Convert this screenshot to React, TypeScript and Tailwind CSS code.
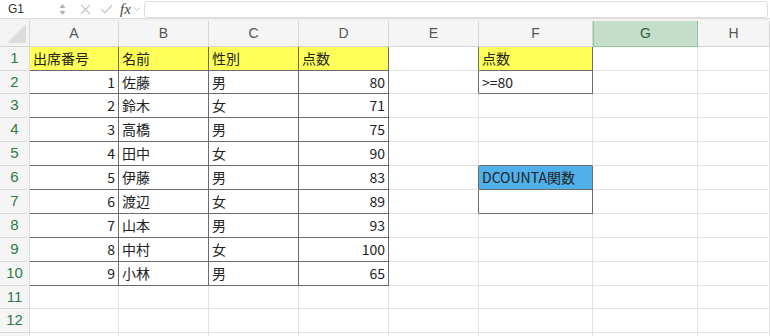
import { Fragment } from 'react';

type Cell = { v?: string; align?: 'l' | 'r'; bg?: string };

const cols = ['A', 'B', 'C', 'D', 'E', 'F', 'G', 'H'];
const rowHeights = [24, 23, 24, 24, 24, 24, 24, 24, 24, 24, 23, 24, 24];

const people = [
  ['1', '佐藤', '男', '80'],
  ['2', '鈴木', '女', '71'],
  ['3', '高橋', '男', '75'],
  ['4', '田中', '女', '90'],
  ['5', '伊藤', '男', '83'],
  ['6', '渡辺', '女', '89'],
  ['7', '山本', '男', '93'],
  ['8', '中村', '女', '100'],
  ['9', '小林', '男', '65'],
];

const sheet: Record<string, Cell> = {};
['出席番号', '名前', '性別', '点数'].forEach((h, i) => {
  sheet[`${i},0`] = { v: h, bg: 'bg-[#ffff57]' };
});
people.forEach((p, r) => {
  p.forEach((v, c) => {
    sheet[`${c},${r + 1}`] = { v, align: c === 0 || c === 3 ? 'r' : 'l' };
  });
});
sheet['5,0'] = { v: '点数', bg: 'bg-[#ffff57]' };
sheet['5,1'] = { v: '>=80' };
sheet['5,5'] = { v: 'DCOUNTA関数', bg: 'bg-[#4fb0ea]' };

// ranges with dark borders
const inBox = (c: number, r: number) =>
  (c >= 0 && c <= 3 && r >= 0 && r <= 9) ||
  (c === 5 && (r === 0 || r === 1 || r === 5 || r === 6));

const FormulaBar = () => (
  <div className="flex h-[19px] items-center border-b border-[#dcdcdc] bg-white text-[#333]">
    <div className="flex w-[68px] items-center justify-between pl-[8px] pr-[2px] font-['Liberation_Sans',sans-serif] text-[12px]">
      <span>G1</span>
      <svg width="7" height="13" viewBox="0 0 7 13">
        <path d="M3.5 1 L6.5 5 H0.5 Z" fill="#b0b0b0" />
        <path d="M3.5 12 L6.5 8 H0.5 Z" fill="#b0b0b0" />
      </svg>
    </div>
    <svg className="ml-[12px]" width="11" height="11" viewBox="0 0 11 11">
      <path d="M1 1 L10 10 M10 1 L1 10" stroke="#c8c8c8" strokeWidth="1.3" />
    </svg>
    <svg className="ml-[9px]" width="13" height="10" viewBox="0 0 13 10">
      <path d="M1 5 L4.8 8.8 L12 1.2" stroke="#c8c8c8" strokeWidth="1.3" fill="none" />
    </svg>
    <span className="ml-[7px] font-['Liberation_Serif',serif] text-[15px] italic leading-none text-[#444]">fx</span>
    <svg className="ml-[2px]" width="8" height="6" viewBox="0 0 8 6">
      <path d="M1 1.5 L4 4.5 L7 1.5" stroke="#c4c4c4" strokeWidth="1" fill="none" />
    </svg>
    <div className="ml-[3px] mr-[2px] h-[17px] flex-1 rounded-[3px] border border-[#dedede] bg-white" />
  </div>
);

export default function App() {
  return (
    <div className="h-[336px] w-[770px] overflow-hidden bg-white font-['Noto_Sans_CJK_JP',sans-serif] text-[#222]">
      <FormulaBar />
      <div className="h-[2px] bg-[#f2f2f2]" />
      <div className="grid grid-cols-[30px_89px_90px_90px_90px_90px_114px_105px_72px]">
        {/* header row */}
        <div className="relative h-[26px] border-b border-r border-[#d6d6d6] bg-[#f3f3f3]">
          <svg className="absolute bottom-[3px] right-[3px]" width="19" height="19" viewBox="0 0 19 19">
            <path d="M19 0 L19 19 L0 19 Z" fill="#dcdcdc" />
          </svg>
        </div>
        {cols.map((c) =>
          c === 'G' ? (
            <div
              key={c}
              className="flex h-[26px] items-center justify-center border-x border-b border-[#93c6a3] bg-[#c3dfcc] font-['Liberation_Sans',sans-serif] text-[14px] text-[#2f5e3e]"
            >
              {c}
            </div>
          ) : (
            <div
              key={c}
              className="flex h-[26px] items-center justify-center border-b border-r border-[#d6d6d6] bg-[#f5f5f5] font-['Liberation_Sans',sans-serif] text-[14px] text-[#555]"
            >
              {c}
            </div>
          )
        )}
        {rowHeights.map((h, r) => (
          <Fragment key={r}>
            <div
              className="flex items-center justify-center border-b border-r border-[#dadada] bg-[#f5f5f5] font-['Liberation_Sans',sans-serif] text-[15px] text-[#2d7a4b]"
              style={{ height: h }}
            >
              {r < 12 ? r + 1 : ''}
            </div>
            {cols.map((_, c) => {
              const cell = sheet[`${c},${r}`];
              const here = inBox(c, r);
              const darkR = here || inBox(c + 1, r);
              const darkB = here || inBox(c, r + 1);
              return (
                <div
                  key={c}
                  className={`flex items-center overflow-hidden whitespace-nowrap border-b border-r px-[3px] text-[14px] ${
                    darkR ? 'border-r-[#6b6b6b]' : 'border-r-[#e2e2e2]'
                  } ${darkB ? 'border-b-[#6b6b6b]' : 'border-b-[#e2e2e2]'} ${
                    cell?.bg ?? 'bg-white'
                  } ${cell?.align === 'r' ? 'justify-end' : 'justify-start'}`}
                  style={{ height: h }}
                >
                  {cell?.v}
                </div>
              );
            })}
          </Fragment>
        ))}
      </div>
    </div>
  );
}
